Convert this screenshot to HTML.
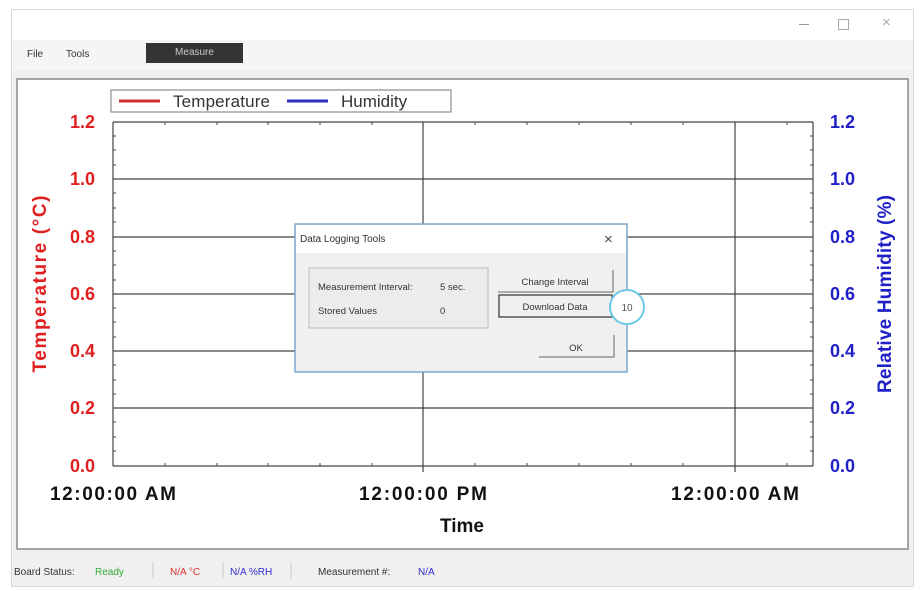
<!DOCTYPE html>
<html><head><meta charset="utf-8"><style>
body{margin:0;width:923px;height:591px;background:#fff;font-family:"Liberation Sans",sans-serif;overflow:hidden;position:relative}
.win{position:absolute;left:11px;top:9px;width:901px;height:576px;border:1px solid #d8d8d8;background:#f0f0f0}
.title{position:absolute;left:0;top:0;width:901px;height:30px;background:#fff}
.menu{position:absolute;top:30px;left:0;width:901px;height:30px;background:#f5f5f5}
.abs{position:absolute}
</style></head><body>
<div class="win">
<div class="title">
<div class="abs" style="left:787px;top:14px;width:10px;height:1px;background:#999"></div>
<div class="abs" style="left:826px;top:9px;width:9px;height:9px;border:1px solid #aaa"></div>
<div class="abs" style="left:870px;top:4px;font-size:15px;color:#aaa">×</div>
</div>
<div class="menu">
<span class="abs" style="left:15px;top:9px;font-size:10px;color:#333">File</span>
<span class="abs" style="left:54px;top:9px;font-size:10px;color:#333">Tools</span>
<div class="abs" style="left:134px;top:3px;width:97px;height:20px;background:#333;color:#ccc;font-size:10px;text-align:center;line-height:20px">Measure</div>
</div>
</div>
<svg class="abs" style="left:0;top:0" width="923" height="591">
<rect x="17" y="79" width="891" height="470" fill="#fff" stroke="#888" stroke-width="1.5"/>
<g stroke="#444" stroke-width="1.2">
<line x1="113" y1="122" x2="813" y2="122"/>
<line x1="113" y1="466" x2="813" y2="466"/>
<line x1="113" y1="122" x2="113" y2="466"/>
<line x1="813" y1="122" x2="813" y2="466"/>
<line x1="113" y1="179" x2="813" y2="179"/>
<line x1="113" y1="237" x2="813" y2="237"/>
<line x1="113" y1="294" x2="813" y2="294"/>
<line x1="113" y1="351" x2="813" y2="351"/>
<line x1="113" y1="408" x2="813" y2="408"/>
<line x1="423" y1="122" x2="423" y2="472"/>
<line x1="735" y1="122" x2="735" y2="472"/>
</g>
<g stroke="#444" stroke-width="1">
<path d="M113 136h3M113 150h3M113 165h3M113 193h3M113 208h3M113 222h3M113 251h3M113 265h3M113 280h3M113 308h3M113 322h3M113 337h3M113 365h3M113 380h3M113 394h3M113 422h3M113 437h3M113 451h3M813 136h-3M813 150h-3M813 165h-3M813 193h-3M813 208h-3M813 222h-3M813 251h-3M813 265h-3M813 280h-3M813 308h-3M813 322h-3M813 337h-3M813 365h-3M813 380h-3M813 394h-3M813 422h-3M813 437h-3M813 451h-3"/>
<path d="M165 466v-3M217 466v-3M268 466v-3M320 466v-3M372 466v-3M475 466v-3M527 466v-3M579 466v-3M631 466v-3M683 466v-3M787 466v-3M165 122v3M217 122v3M268 122v3M320 122v3M372 122v3M475 122v3M527 122v3M579 122v3M631 122v3M683 122v3M787 122v3"/>
</g>
<rect x="111" y="90" width="340" height="22" fill="#fff" stroke="#777"/>
<line x1="119" y1="101" x2="160" y2="101" stroke="#d03030" stroke-width="3"/>
<text x="173" y="107" font-size="17" fill="#333" font-family="Liberation Sans" textLength="97">Temperature</text>
<line x1="287" y1="101" x2="328" y2="101" stroke="#3030c0" stroke-width="3"/>
<text x="341" y="107" font-size="17" fill="#333" font-family="Liberation Sans">Humidity</text>
<g font-family="Liberation Sans" font-weight="bold" font-size="18" fill="#e02020" text-anchor="end">
<text x="95" y="128">1.2</text><text x="95" y="185">1.0</text><text x="95" y="243">0.8</text><text x="95" y="300">0.6</text><text x="95" y="357">0.4</text><text x="95" y="414">0.2</text><text x="95" y="472">0.0</text>
</g>
<g font-family="Liberation Sans" font-weight="bold" font-size="18" fill="#2020c8">
<text x="830" y="128">1.2</text><text x="830" y="185">1.0</text><text x="830" y="243">0.8</text><text x="830" y="300">0.6</text><text x="830" y="357">0.4</text><text x="830" y="414">0.2</text><text x="830" y="472">0.0</text>
</g>
<text transform="translate(46,284) rotate(-90)" text-anchor="middle" font-family="Liberation Sans" font-weight="bold" font-size="19" fill="#e02020" textLength="177">Temperature (°C)</text>
<text transform="translate(891,294) rotate(-90)" text-anchor="middle" font-family="Liberation Sans" font-weight="bold" font-size="19" fill="#2020c8" textLength="198">Relative Humidity (%)</text>
<g font-family="Liberation Sans" font-weight="bold" font-size="19" fill="#111" text-anchor="middle">
<text x="113" y="500" textLength="126">12:00:00 AM</text><text x="423" y="500" textLength="128">12:00:00 PM</text><text x="735" y="500" textLength="128">12:00:00 AM</text>
<text x="462" y="532">Time</text>
</g>
<g font-family="Liberation Sans" font-size="10">
<text x="14" y="575" fill="#333">Board Status:</text><text x="95" y="575" fill="#3a3">Ready</text>
<line x1="153" y1="562" x2="153" y2="579" stroke="#ccc"/>
<text x="170" y="575" fill="#e03030">N/A °C</text>
<line x1="223" y1="562" x2="223" y2="579" stroke="#ccc"/>
<text x="230" y="575" fill="#3030d0">N/A %RH</text>
<line x1="291" y1="562" x2="291" y2="579" stroke="#ccc"/>
<text x="318" y="575" fill="#333">Measurement #:</text><text x="418" y="575" fill="#3030d0">N/A</text>
</g>
<rect x="295" y="224" width="332" height="148" fill="#f0f0f0" stroke="#7aa7d0" stroke-width="1.5"/>
<rect x="296" y="225" width="330" height="28" fill="#fff"/>
<text x="300" y="242" font-family="Liberation Sans" font-size="10" fill="#333">Data Logging Tools</text>
<text x="604" y="244" font-family="Liberation Sans" font-size="15" fill="#444">×</text>
<rect x="309" y="268" width="179" height="60" fill="#ececec" stroke="#bbb"/>
<g font-family="Liberation Sans" font-size="9.5" fill="#333">
<text x="318" y="290">Measurement Interval:</text><text x="440" y="290">5 sec.</text>
<text x="318" y="314">Stored Values</text><text x="440" y="314">0</text>
</g>
<path d="M498 292h115v-22" fill="none" stroke="#666"/>
<text x="555" y="285" text-anchor="middle" font-family="Liberation Sans" font-size="9.5" fill="#333">Change Interval</text>
<rect x="499" y="295" width="113" height="22" fill="#f0f0f0" stroke="#333" stroke-width="1.2"/>
<text x="555" y="310" text-anchor="middle" font-family="Liberation Sans" font-size="9.5" fill="#333">Download Data</text>
<path d="M539 357h75v-22" fill="none" stroke="#666"/>
<text x="576" y="351" text-anchor="middle" font-family="Liberation Sans" font-size="9.5" fill="#333">OK</text>
<circle cx="627" cy="307" r="17" fill="#fff" stroke="#6cc8e8" stroke-width="2"/>
<text x="627" y="311" text-anchor="middle" font-family="Liberation Sans" font-size="10" fill="#555">10</text>
</svg>
</body></html>
